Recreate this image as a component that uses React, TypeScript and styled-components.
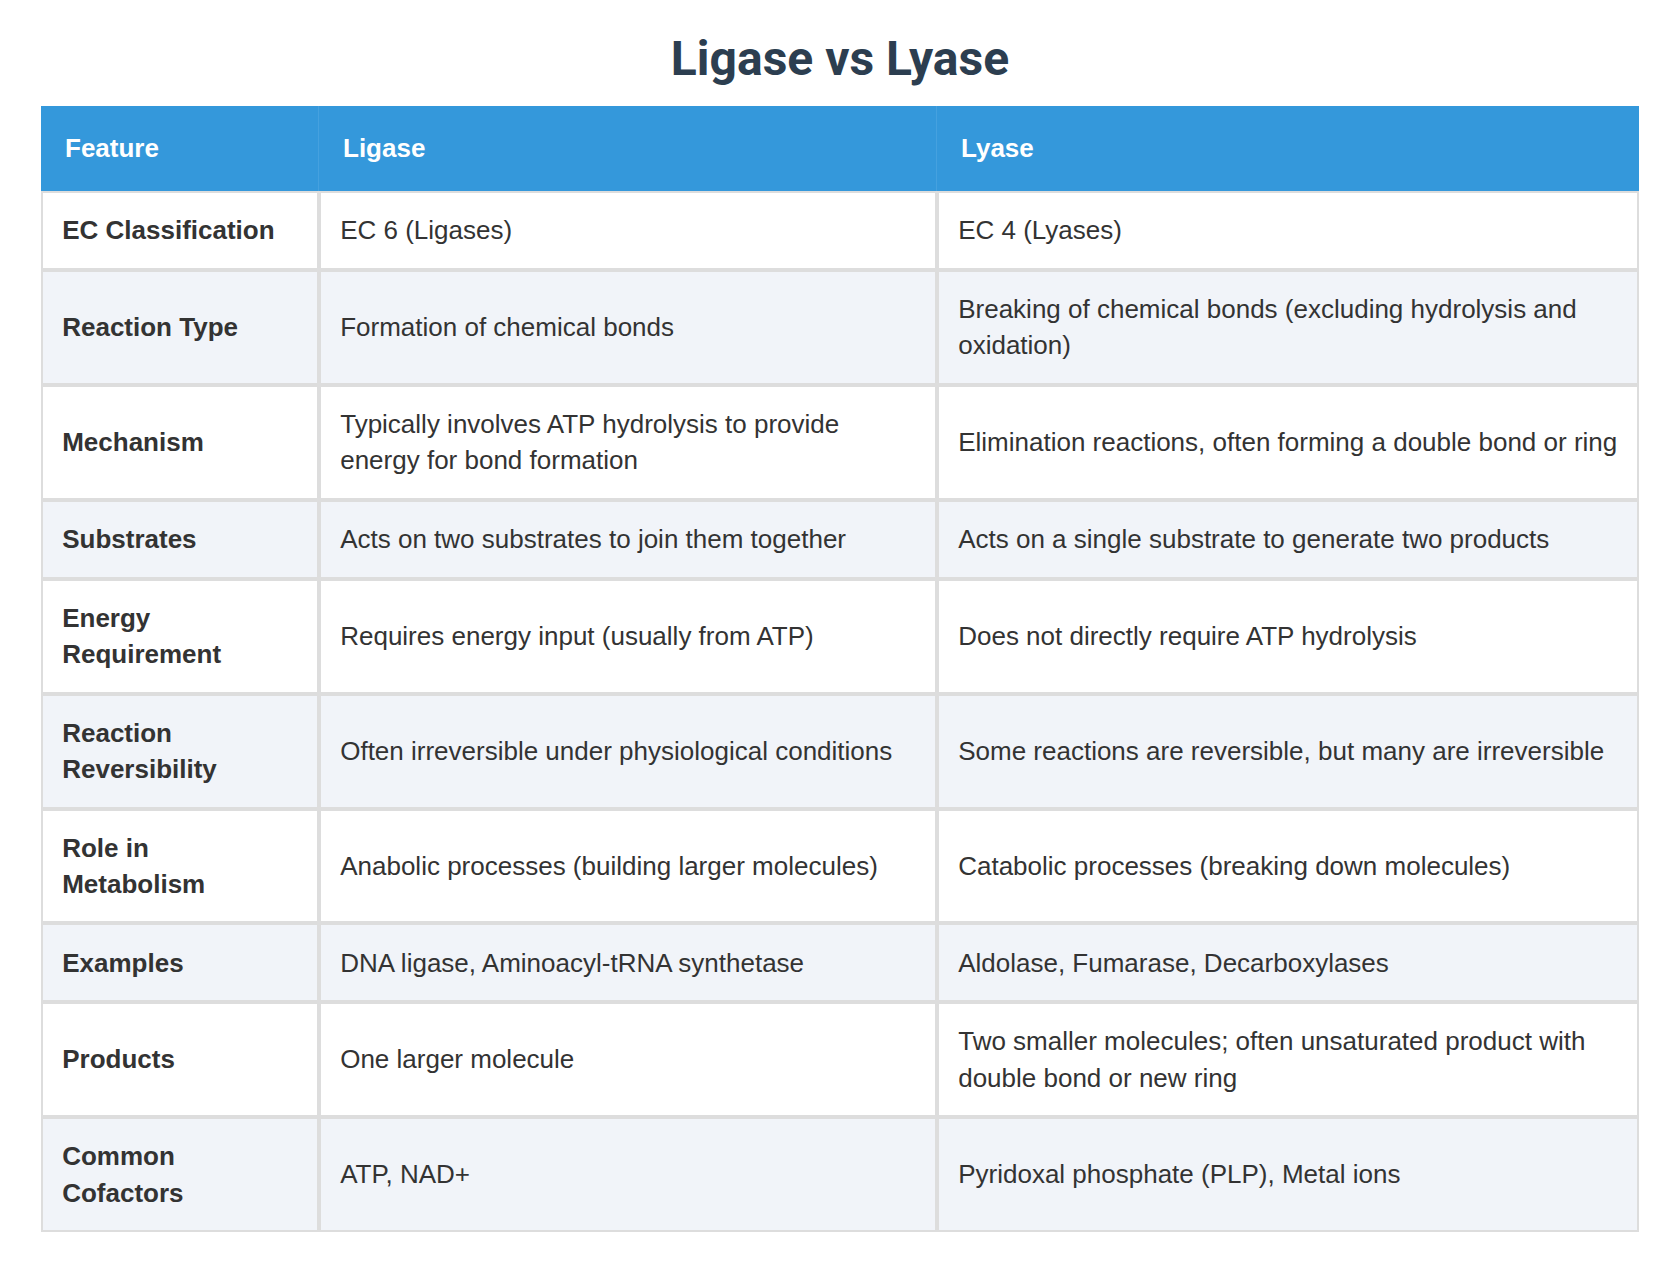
import * as React from 'react';
import styled, { createGlobalStyle } from 'styled-components';

const GlobalStyle = createGlobalStyle`
    html, body {
        margin: 0;
        padding: 0;
        background: #ffffff;
    }
    body {
        font-family: "Liberation Sans", Arial, Helvetica, sans-serif;
        color: #333333;
    }
`;

const Page = styled.div`
    padding: 31px 41px 40px;
`;

const Title = styled.h1`
    margin: 0 0 19px;
    font-family: Roboto, "Liberation Sans", Arial, sans-serif;
    font-size: 48px;
    line-height: 56px;
    font-weight: 700;
    color: #2c3e50;
    text-align: center;
`;

const Table = styled.table`
    width: 100%;
    table-layout: fixed;
    border-collapse: separate;
    border-spacing: 0;
    font-family: "Liberation Sans", Arial, Helvetica, sans-serif;
    font-size: 26px;
    line-height: 36.3px;
`;

const HeadCell = styled.th<{ $width?: number }>`
    box-sizing: border-box;
    width: ${({ $width }) => ($width ? `${$width}px` : 'auto')};
    padding: 24px 24px 25px;
    background-color: #3498db;
    color: #ffffff;
    font-weight: 700;
    text-align: left;
    border-right: 1px solid #45a1df;
    &:last-child {
        border-right: none;
    }
`;

const Row = styled.tr`
    background-color: #ffffff;
    &:nth-child(even) {
        background-color: #f1f4f9;
    }
`;

const Cell = styled.td<{ $feature?: boolean }>`
    box-sizing: border-box;
    padding: 19.2px;
    border: 2px solid #dddddd;
    vertical-align: middle;
    color: #333333;
    font-weight: ${({ $feature }) => ($feature ? 700 : 400)};
`;

interface Comparison {
    feature: string;
    ligase: string;
    lyase: string;
}

const rows: Comparison[] = [
    { feature: 'EC Classification', ligase: 'EC 6 (Ligases)', lyase: 'EC 4 (Lyases)' },
    { feature: 'Reaction Type', ligase: 'Formation of chemical bonds', lyase: 'Breaking of chemical bonds (excluding hydrolysis and oxidation)' },
    { feature: 'Mechanism', ligase: 'Typically involves ATP hydrolysis to provide energy for bond formation', lyase: 'Elimination reactions, often forming a double bond or ring' },
    { feature: 'Substrates', ligase: 'Acts on two substrates to join them together', lyase: 'Acts on a single substrate to generate two products' },
    { feature: 'Energy Requirement', ligase: 'Requires energy input (usually from ATP)', lyase: 'Does not directly require ATP hydrolysis' },
    { feature: 'Reaction Reversibility', ligase: 'Often irreversible under physiological conditions', lyase: 'Some reactions are reversible, but many are irreversible' },
    { feature: 'Role in Metabolism', ligase: 'Anabolic processes (building larger molecules)', lyase: 'Catabolic processes (breaking down molecules)' },
    { feature: 'Examples', ligase: 'DNA ligase, Aminoacyl-tRNA synthetase', lyase: 'Aldolase, Fumarase, Decarboxylases' },
    { feature: 'Products', ligase: 'One larger molecule', lyase: 'Two smaller molecules; often unsaturated product with double bond or new ring' },
    { feature: 'Common Cofactors', ligase: 'ATP, NAD+', lyase: 'Pyridoxal phosphate (PLP), Metal ions' },
];

export default function App() {
    return (
        <>
            <GlobalStyle />
            <Page>
                <Title>Ligase vs Lyase</Title>
                <Table>
                    <thead>
                        <tr>
                            <HeadCell $width={278}>Feature</HeadCell>
                            <HeadCell $width={618}>Ligase</HeadCell>
                            <HeadCell>Lyase</HeadCell>
                        </tr>
                    </thead>
                    <tbody>
                        {rows.map((row) => (
                            <Row key={row.feature}>
                                <Cell $feature>{row.feature}</Cell>
                                <Cell>{row.ligase}</Cell>
                                <Cell>{row.lyase}</Cell>
                            </Row>
                        ))}
                    </tbody>
                </Table>
            </Page>
        </>
    );
}
